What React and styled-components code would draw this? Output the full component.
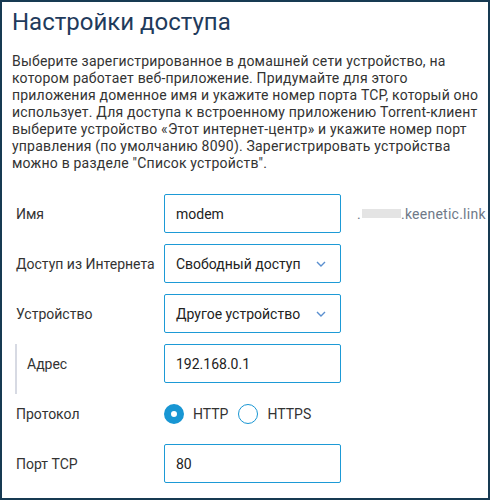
import React, { useState } from "react";
import styled, { createGlobalStyle } from "styled-components";

const GlobalStyle = createGlobalStyle`
    html, body {
        margin: 0;
        padding: 0;
        background: #fff;
    }
    * {
        box-sizing: border-box;
    }
`

const Frame = styled.div`
    width: 490px;
    height: 500px;
    border: 2px solid #173a52;
    padding: 6px 0 0 10px;
    font-family: Roboto, "Liberation Sans", sans-serif;
    color: #333;
    overflow: hidden;
`

const Title = styled.h1`
    margin: 0;
    font-size: 24px;
    line-height: 28px;
    font-weight: 400;
    color: #1f3b5c;
`

const Intro = styled.p`
    margin: 17px 0 0 0;
    font-size: 14px;
    line-height: 17px;
    letter-spacing: 0.2px;
    white-space: nowrap;
    color: #333;
`

const Form = styled.div`
    margin-top: 22px;
    padding-left: 4px;
    display: flex;
    flex-direction: column;
`

const Row = styled.div`
    display: flex;
    align-items: center;
    padding-bottom: 11px;
`

const SubGroup = styled.div`
    border-left: 2px solid #d7dae3;
    padding-left: 10px;
    margin-left: -1px;
`

const Label = styled.div`
    width: ${p => p.$width || 148}px;
    flex-shrink: 0;
    font-size: 14px;
    color: #333;
`

const Box = styled.div`
    width: 177px;
    height: 39px;
    border: 1px solid #1d9ad6;
    border-radius: 2px;
    display: flex;
    align-items: center;
    justify-content: space-between;
    padding: 0 14px 0 11px;
    font-size: 14px;
    color: #222;
    cursor: ${p => (p.$select ? "pointer" : "text")};
`

const Suffix = styled.div`
    margin-left: 16px;
    font-size: 14px;
    letter-spacing: 0.25px;
    color: #6f7988;
    display: flex;
    align-items: center;
`

const Masked = styled.span`
    display: inline-block;
    width: 39px;
    height: 9px;
    background: #e4e4e4;
    margin: 0 0 0 1px;
`

const RadioGroup = styled.div`
    display: flex;
    align-items: center;
    height: 39px;
`

const RadioOption = styled.label`
    display: flex;
    align-items: center;
    margin-right: 10px;
    font-size: 14px;
    color: #333;
    cursor: pointer;
`

const RadioDot = styled.span`
    width: 20px;
    height: 20px;
    border-radius: 50%;
    margin-right: 9px;
    border: ${p => (p.$checked ? "7px solid #1896d3" : "1.5px solid #1896d3")};
    background: #fff;
`

const Chevron = () => (
    <svg width="10" height="6" viewBox="0 0 10 6">
        <path d="M1 1 L5 5 L9 1" fill="none" stroke="#5a8fcf" strokeWidth="1.4" />
    </svg>
);

const App = () => {
    const [protocol, setProtocol] = useState("http");
    return (
        <Frame>
            <GlobalStyle />
            <Title>Настройки доступа</Title>
            <Intro>
                Выберите зарегистрированное в домашней сети устройство, на<br />
                котором работает веб-приложение. Придумайте для этого<br />
                приложения доменное имя и укажите номер порта TCP, который оно<br />
                использует. Для доступа к встроенному приложению Torrent-клиент<br />
                выберите устройство «Этот интернет-центр» и укажите номер порт<br />
                управления (по умолчанию 8090). Зарегистрировать устройства<br />
                можно в разделе "Список устройств".
            </Intro>
            <Form>
                <Row>
                    <Label>Имя</Label>
                    <Box>modem</Box>
                    <Suffix>.<Masked />.keenetic.link</Suffix>
                </Row>
                <Row>
                    <Label>Доступ из Интернета</Label>
                    <Box $select>Свободный доступ<Chevron /></Box>
                </Row>
                <Row>
                    <Label>Устройство</Label>
                    <Box $select>Другое устройство<Chevron /></Box>
                </Row>
                <SubGroup>
                    <Row>
                        <Label $width={137}>Адрес</Label>
                        <Box>192.168.0.1</Box>
                    </Row>
                </SubGroup>
                <Row>
                    <Label>Протокол</Label>
                    <RadioGroup>
                        <RadioOption onClick={() => setProtocol("http")}>
                            <RadioDot $checked={protocol === "http"} />HTTP
                        </RadioOption>
                        <RadioOption onClick={() => setProtocol("https")}>
                            <RadioDot $checked={protocol === "https"} />HTTPS
                        </RadioOption>
                    </RadioGroup>
                </Row>
                <Row>
                    <Label>Порт TCP</Label>
                    <Box>80</Box>
                </Row>
            </Form>
        </Frame>
    );
};

export default App;
